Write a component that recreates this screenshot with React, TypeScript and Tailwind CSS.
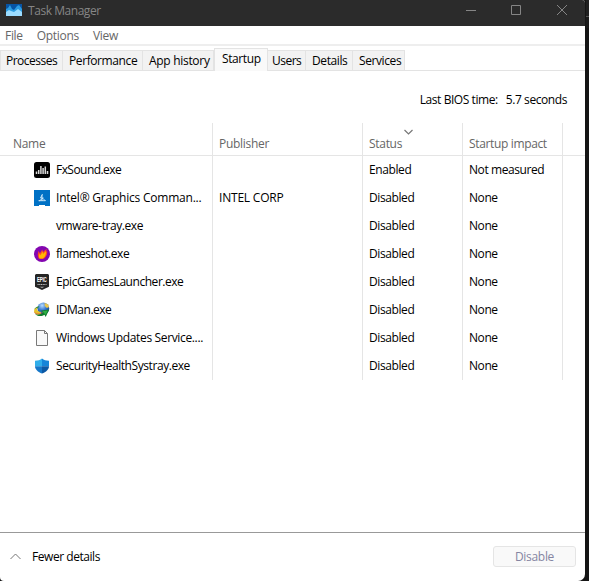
import type { ReactNode } from "react";

const tabs = [
  { name: "Processes", box: "w-[63px] pl-[5px]", text: "tracking-[-0.5px]" },
  { name: "Performance", box: "w-[80px] pl-[6px]", text: "tracking-[-0.4px]" },
  { name: "App history", box: "w-[71px] pl-[6px]", text: "tracking-[-0.3px]" },
  { name: "Startup", box: "w-[54px] pl-[7px]", text: "tracking-[-0.4px]" },
  { name: "Users", box: "w-[38px] pl-[4px]", text: "tracking-[-0.5px]" },
  { name: "Details", box: "w-[47px] pl-[6px]", text: "tracking-[-0.4px]" },
  { name: "Services", box: "w-[52px] pl-[6px]", text: "tracking-[-0.4px]" },
];

function FxIcon() {
  return (
    <svg width="16" height="16" viewBox="0 0 16 16">
      <rect width="16" height="16" rx="2.500" fill="#000" />
      <path d="M2.500 9.500V12M4.700 8v4M6.900 4v8M9.100 6v6M11.300 4.500V12M13.500 9v3" stroke="#d8d8d8" strokeWidth="1.500" />
    </svg>
  );
}

function IntelIcon() {
  return (
    <svg width="16" height="16" viewBox="0 0 16 16">
      <rect width="16" height="16" fill="#0071c5" />
      <path d="M8.500 4L6.500 8h2.800L5 11M8 5v6M9 8.500l2.500 2.500M4.500 10.700h7" stroke="#d5ecfc" strokeWidth=".9" fill="none" />
      <rect x="5" y="15" width="6" height="1" fill="#fff" />
    </svg>
  );
}

function FlameIcon() {
  return (
    <svg width="16" height="16" viewBox="0 0 16 16">
      <circle cx="8" cy="8" r="8" fill="#8306b0" />
      <path d="M5 12.800C3.300 10.500 3.500 7.500 4.600 5l1.300 2.300L8.300 3.600l.6 2.400 3.900-3.200-.7 2.600 1.100-.4c.3 3.600-1.200 6.700-4.200 8Z" fill="#ff4a22" />
      <path d="M5.600 12.600c-1-2-.6-3.600.1-5.200l.9 1.900 1.900-4 .5 2.600 2.900-2.700c.4 3.300-.9 6.200-3.300 7.400Z" fill="#ffb800" />
    </svg>
  );
}

function EpicIcon() {
  return (
    <svg className="overflow-visible" width="16" height="16" viewBox="0 0 16 16">
      <path d="M2 0h12l1 1v11.800L8 16l-7-3.200V1Z" fill="#252525" />
      <g transform="translate(3 8) scale(.55 1)">
        <text x="0" y="0" fontSize="8" fontWeight="700" fill="#fff" className="font-['Liberation_Sans',sans-serif] tracking-[-0.3px]">
          EPIC
        </text>
      </g>
      <path d="M3.500 10.500h9" stroke="#bbb" strokeWidth="1.200" strokeDasharray="1.200 .5" />
      <path d="M5.500 12.800h5L8 14Z" fill="#aaa" />
    </svg>
  );
}

function IdmIcon() {
  return (
    <svg width="16" height="16" viewBox="0 0 16 16">
      <defs>
        <radialGradient id="globe" cx=".4" cy=".25" r=".8">
          <stop offset="0" stopColor="#b7dcff" />
          <stop offset=".5" stopColor="#3475cc" />
          <stop offset="1" stopColor="#123b83" />
        </radialGradient>
      </defs>
      <circle cx="9.300" cy="6.500" r="5.900" fill="url(#globe)" />
      <path d="M10.500 1c2.500.2 4.100 2 4.600 4l-2.300 1-2-2Z" fill="#e9c64b" />
      <path d="M0 7.500C1.500 5 3.500 4.200 5.500 4.200L3.500 6.500Z" fill="#2d8b3d" />
      <path d="M0 9.500C0 7 1.500 6 3.500 5.800 2.300 8 4 9.800 7 10l-.5 2.500C3 13 .5 12 0 9.500Z" fill="#e6c22e" />
      <path d="M.5 11c2.500 2.400 6 1.800 8.500-.7L6.300 8.800l8.900-1.300L11.700 15l-1.200-2.300C8 14.600 3.200 15 .5 11Z" fill="#0f7d2d" />
      <path d="M8.300 9.300l5.400-.8-2 4.300Z" fill="#2fae43" />
      <path d="M.5 10.500c2.500 2.100 5.500 1.700 8-.2" stroke="#d85835" fill="none" strokeWidth=".8" />
    </svg>
  );
}

function FileIcon() {
  return (
    <svg width="16" height="16" viewBox="0 0 16 16">
      <path d="M2.500.5h8l3 3v12h-11Z" fill="#f9f9f9" stroke="#797979" />
      <path d="M10.500.5v3h3" fill="none" stroke="#797979" />
    </svg>
  );
}

function ShieldIcon() {
  return (
    <svg width="16" height="16" viewBox="0 0 16 16">
      <path d="M8 .6v7.600H1V2.800C4 2.800 6.200 2 8 .6Z" fill="#31aeea" />
      <path d="M8 .6v7.600h7V2.800C12 2.800 9.800 2 8 .6Z" fill="#1785d8" />
      <path d="M1 8.200h7v7.400C4 14 1 11.500 1 8.200Z" fill="#1677c9" />
      <path d="M15 8.200H8v7.400c4-1.600 7-4.100 7-7.400Z" fill="#0c59a5" />
    </svg>
  );
}

type Item = { icon: ReactNode; name: string; text: string; publisher?: string; status: string; impact: string };

const items: Item[] = [
  { icon: <FxIcon />, name: "FxSound.exe", text: "tracking-[-0.55px]", status: "Enabled", impact: "Not measured" },
  { icon: <IntelIcon />, name: "Intel® Graphics Comman...", text: "tracking-[-0.22px]", publisher: "INTEL CORP", status: "Disabled", impact: "None" },
  { icon: null, name: "vmware-tray.exe", text: "tracking-[-0.42px]", status: "Disabled", impact: "None" },
  { icon: <FlameIcon />, name: "flameshot.exe", text: "tracking-[-0.45px]", status: "Disabled", impact: "None" },
  { icon: <EpicIcon />, name: "EpicGamesLauncher.exe", text: "tracking-[-0.46px]", status: "Disabled", impact: "None" },
  { icon: <IdmIcon />, name: "IDMan.exe", text: "tracking-[-0.5px]", status: "Disabled", impact: "None" },
  { icon: <FileIcon />, name: "Windows Updates Service....", text: "tracking-[-0.35px]", status: "Disabled", impact: "None" },
  { icon: <ShieldIcon />, name: "SecurityHealthSystray.exe", text: "tracking-[-0.43px]", status: "Disabled", impact: "None" },
];

const columns = "grid grid-cols-[213px_150px_100px_100px_1fr]";
const cell = "border-r border-[#e5e5e5] flex";

export default function App() {
  return (
    <div className="flex h-[581px] w-[589px] overflow-hidden bg-[#151515] font-['Open_Sans','Noto_Sans',sans-serif] text-[12px] leading-4 tracking-[-0.3px] whitespace-nowrap text-black">
      <div className="flex h-[581px] w-[585px] shrink-0 flex-col overflow-hidden rounded-tr-[3px] rounded-br-[7px] rounded-bl-[4px] bg-white">
        <header className="flex h-[26px] shrink-0 items-start bg-[#2b2b2b] text-[#868686]">
          <svg className="mt-1 ml-[6px]" width="16" height="12" viewBox="0 0 16 12">
            <rect width="16" height="12" fill="#0754a4" />
            <path d="M0 5l2-1 2-3 2 4 2 1 3-4 2-1 3 4v7H0Z" fill="#2c9ce1" />
            <path d="M0 8l3-2 2 1 3 1 4-3 4 3v4H0Z" fill="#9bdcff" />
          </svg>
          <span className="mt-[3px] ml-[6px] grow tracking-[-0.45px]">Task Manager</span>
          <svg width="130" height="26" viewBox="455 0 130 26" fill="none" stroke="#858585">
            <path d="M466 10.500h10M511.500 5.500h9v9h-9ZM557 5l10 10M567 5l-10 10" />
          </svg>
        </header>
        <nav className="flex h-[20px] shrink-0 gap-[14px] border-b-2 border-[#eeeeee] pt-[2px] pl-[5px] text-[#666666]">
          <span>File</span>
          <span>Options</span>
          <span>View</span>
        </nav>
        <div className="flex h-[25px] shrink-0 items-end border-b border-[#e3e3e3]">
          {tabs.map((tab) =>
            tab.name === "Startup" ? (
              <div key={tab.name} className={`-mb-px h-[23px] border border-b-0 border-[#e3e3e3] bg-[#f9f9f9] pt-[2px] ${tab.box} ${tab.text}`}>
                {tab.name}
              </div>
            ) : (
              <div key={tab.name} className={`h-[20px] border-t border-r border-[#e3e3e3] bg-[#f2f2f2] pt-[2px] first:border-l ${tab.box} ${tab.text}`}>
                {tab.name}
              </div>
            ),
          )}
        </div>
        <div className="flex h-[52px] shrink-0 justify-end gap-2 pt-[21px] pr-[18px]">
          <span className="tracking-[-0.43px]">Last BIOS time:</span>
          <span className="tracking-[-0.42px]">5.7 seconds</span>
        </div>
        <div className={`${columns} h-[33px] shrink-0 border-b border-[#e5e5e5] text-[#666666]`}>
          <div className={`${cell} pt-[13px] pl-[13px]`}>Name</div>
          <div className={`${cell} pt-[13px] pl-[6px]`}>Publisher</div>
          <div className={`${cell} relative pt-[13px] pl-[6px]`}>
            Status
            <svg className="absolute top-[6px] left-[41px]" width="9" height="6" viewBox="0 0 9 6" fill="none" stroke="#777">
              <path d="M.5 1l4 4 4-4" strokeWidth="1.200" />
            </svg>
          </div>
          <div className={`${cell} pt-[13px] pl-[6px] tracking-[-0.35px]`}>Startup impact</div>
        </div>
        <main>
          {items.map((item) => (
            <div key={item.name} className={`${columns} h-7`}>
              <div className={`${cell} gap-[6px] pt-[6px] pl-[34px]`}>
                <div className="h-4 w-4 shrink-0">{item.icon}</div>
                <span className={item.text}>{item.name}</span>
              </div>
              <div className={`${cell} pt-[6px] pl-[6px] tracking-[-0.2px]`}>{item.publisher}</div>
              <div className={`${cell} pt-[6px] pl-[6px] tracking-[-0.4px]`}>{item.status}</div>
              <div className={`${cell} pt-[6px] pl-[6px] tracking-[-0.42px]`}>{item.impact}</div>
            </div>
          ))}
        </main>
        <footer className="mt-auto flex h-[49px] shrink-0 items-start border-t border-[#999999]">
          <svg className="mt-[20px] ml-[10px]" width="11" height="7" viewBox="0 0 11 7" fill="none" stroke="#777">
            <path d="M.5 6l5-5 5 5" />
          </svg>
          <span className="mt-[16px] ml-[11px] grow tracking-[-0.45px]">Fewer details</span>
          <button className="mt-[13px] mr-[9px] h-[21px] w-[83px] rounded-[3px] border border-[#e5e5e5] bg-[#f9f9f9] text-[#8585a2]">Disable</button>
        </footer>
      </div>
      <div className="flex grow flex-col pl-px">
        <div className="h-[17px] border-b border-[#555555] bg-[#202020]" />
        <div className="h-[11px] bg-[#1a1a1a]" />
      </div>
    </div>
  );
}
